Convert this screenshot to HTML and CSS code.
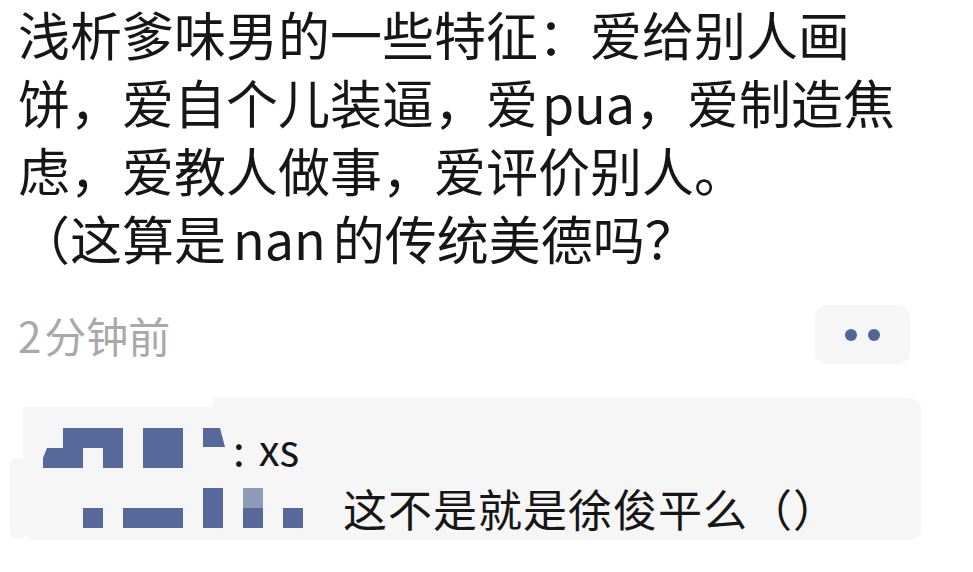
FILE: index.html
```html
<!DOCTYPE html>
<html lang="zh-CN">
<head>
<meta charset="utf-8">
<title>动态</title>
<link rel="stylesheet" href="styles.css">
</head>
<body>
<div class="post">
  <p class="content">浅析爹味男的一些特征：爱给别人画<br>饼，爱自个儿装逼，爱<span class="latin pua">pua</span>，爱制造焦<br>虑，爱教人做事，爱评价别人。<br>（这算是<span class="latin">nan</span>的传统美德吗？</p>
  <div class="meta">
    <span class="time"><span class="num">2</span>分钟前</span>
    <button class="more" type="button"><span class="dot"></span><span class="dot"></span></button>
  </div>
  <div class="quote">
    <div class="qrow">
      <svg class="mosaic m1" width="182" height="40" viewBox="0 0 182 40">
        <rect x="20" y="0" width="60" height="20" fill="#56699a"/>
        <polygon points="4,20 40,20 40,40 0,40 0,30" fill="#56699a"/>
        <rect x="60" y="20" width="20" height="20" fill="#56699a"/>
        <rect x="100" y="0" width="40" height="40" fill="#56699a"/>
        <polygon points="160,0 177,0 182,19 160,19" fill="#56699a"/>
      </svg>
      <span class="colon">:</span><span class="qname">xs</span>
    </div>
    <div class="qrow">
      <svg class="mosaic m2" width="260" height="40" viewBox="0 0 260 40">
        <rect x="40" y="20" width="20" height="20" fill="#56699a"/>
        <rect x="80" y="20" width="60" height="20" fill="#56699a"/>
        <rect x="160" y="0" width="20" height="40" fill="#56699a"/>
        <rect x="200" y="0" width="20" height="20" fill="#8e9bb8"/>
        <rect x="200" y="20" width="20" height="20" fill="#56699a"/>
        <rect x="240" y="20" width="20" height="20" fill="#56699a"/>
      </svg>
      <span class="qtext">这不是就是徐俊平么（）</span>
    </div>
  </div>
</div>
</body>
</html>
```

FILE: styles.css
```css
* { box-sizing: border-box; }
body {
  margin: 0;
  background: #ffffff;
  font-family: "Noto Sans CJK SC", "Noto Sans", sans-serif;
  color: #161616;
}
.post {
  padding-left: 18px;
}
.content {
  margin: 0;
  width: 930px;
  font-size: 52px;
  line-height: 68px;
  color: #161616;
}
.latin { margin: 0 7px; }
.latin.pua { margin: 0 0 0 4px; }
.meta {
  width: 892px;
  margin-top: 33px;
  display: flex;
  align-items: center;
  justify-content: space-between;
}
.time {
  font-size: 42px;
  line-height: 48px;
  color: #a9a9a9;
}
.num { margin-right: 3px; }
.more {
  width: 95px;
  height: 59px;
  border: none;
  border-radius: 12px;
  background: #f6f6f7;
  display: flex;
  align-items: center;
  justify-content: center;
  gap: 11px;
  padding: 0;
}
.dot {
  width: 12px;
  height: 12px;
  border-radius: 50%;
  background: #4f6699;
}
.quote {
  position: relative;
  margin-top: 34px;
  margin-left: 5px;
  width: 898px;
  height: 142px;
  background: #f6f6f6;
  border-radius: 12px;
  padding: 30px 0 12px 20px;
  display: flex;
  flex-direction: column;
  gap: 20px;
}
.quote::before {
  content: "";
  position: absolute;
  left: 0;
  top: 0;
  width: 190px;
  height: 9px;
  background: #ffffff;
}
.quote::after {
  content: "";
  position: absolute;
  left: -13px;
  top: 60px;
  width: 14px;
  height: 80px;
  background: #f6f6f6;
  border-radius: 6px 0 0 6px;
}
.qrow {
  height: 40px;
  display: flex;
  align-items: center;
  font-size: 42px;
  line-height: 40px;
  color: #161616;
}
.mosaic { display: block; flex: none; }
.colon { margin-left: 8px; }
.qname { margin-left: 14px; }
.qtext { margin-left: 40px; font-size: 44px; letter-spacing: 1px; }
```
